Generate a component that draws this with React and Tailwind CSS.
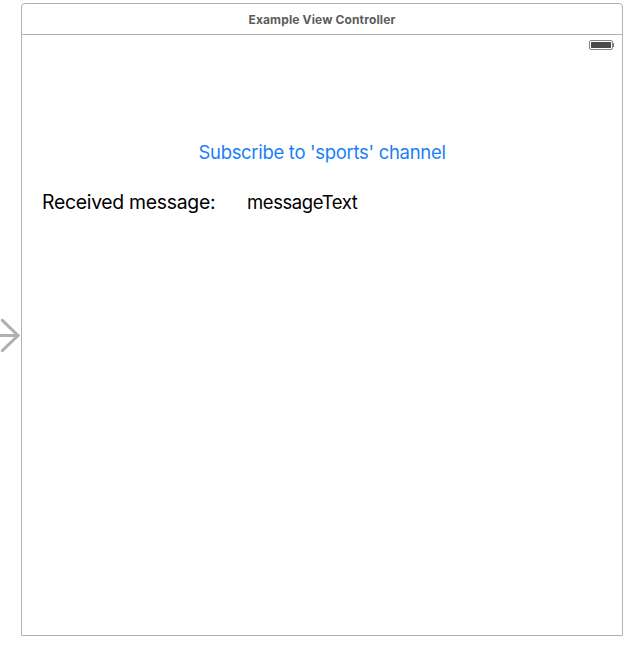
function EntryArrow() {
  return (
    <svg className="mt-[316px] h-[38px] w-[21px] shrink-0" viewBox="0 0 21 38" fill="none" stroke="#b0b0b0" strokeWidth="3">
      <path d="M0 19.5H18" />
      <path d="M2.3 4.3L18 19.5L2.3 34.7" strokeLinecap="round" />
    </svg>
  );
}

function Battery() {
  return (
    <svg className="h-[10px] w-[26px]" viewBox="0 0 26 10">
      <rect x="0.5" y="0.5" width="23" height="9" rx="1.5" fill="none" stroke="#858585" />
      <rect x="2" y="2" width="20" height="6" rx="0.5" fill="#4a4a4a" />
      <path d="M24 3h1v4h-1z" fill="#777777" />
    </svg>
  );
}

export default function App() {
  return (
    <div className="flex h-[646px] w-[630px] items-start bg-white font-['Inter',sans-serif]">
      <EntryArrow />
      <main className="mt-[3px] h-[633px] w-[602px] shrink-0 rounded-t-[4px] border border-[#b2b2b2] bg-white">
        <header className="flex h-[31px] items-center justify-center border-b border-[#b2b2b2] pt-px text-[12px] font-bold text-[#5c5c5c]">
          <h1 className="whitespace-nowrap tracking-[0.14px]">Example View Controller</h1>
        </header>
        <div className="flex justify-end pt-[5px] pr-[7px]">
          <Battery />
        </div>
        <div className="mt-[90px] flex h-[24px] justify-center">
          <button className="text-[18.5px] leading-[23px] font-normal tracking-[-0.31px] whitespace-nowrap text-[#1a80f8]">Subscribe to 'sports' channel</button>
        </div>
        <div className="mt-[26px] flex h-[26px] pl-5 font-normal text-black">
          <span className="w-[205px] text-[19.4px] leading-[24px] tracking-[-0.29px] whitespace-nowrap">Received message:</span>
          <span className="text-[18.5px] leading-[24px] tracking-[-0.42px] whitespace-nowrap">messageText</span>
        </div>
      </main>
    </div>
  );
}
